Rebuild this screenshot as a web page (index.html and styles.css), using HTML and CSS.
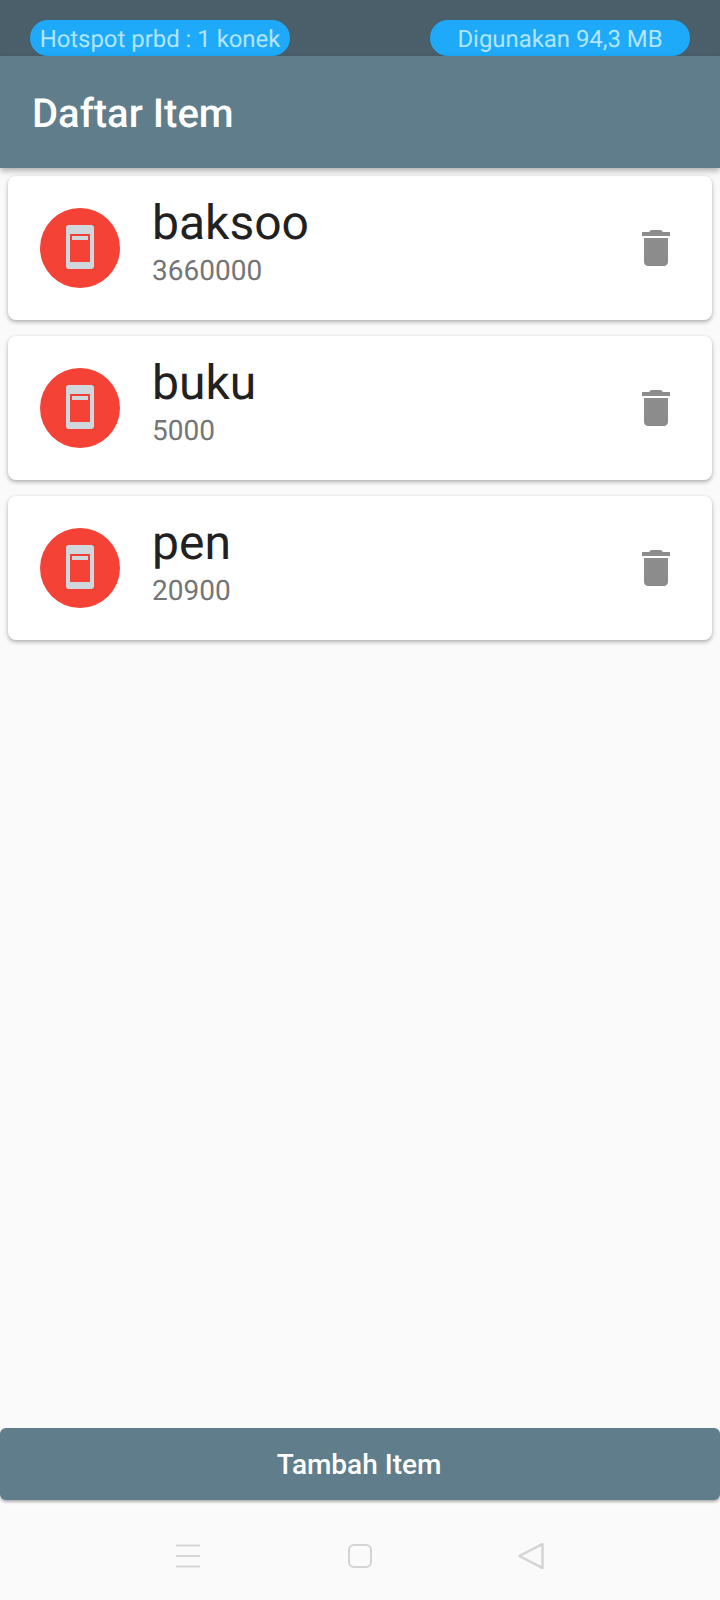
FILE: index.html
```html
<!DOCTYPE html>
<html lang="en">
<head>
    <meta charset="UTF-8">
    <meta name="viewport" content="width=device-width, initial-scale=1.0">
    <title>Daftar Item</title>
    <link rel="stylesheet" href="styles.css">
</head>
<body>
    <div class="status-bar">
        <span class="pill">Hotspot prbd : 1 konek</span>
        <span class="pill">Digunakan 94,3 MB</span>
    </div>
    <header class="app-bar">Daftar Item</header>

    <main class="item-list">
        <div class="card">
            <div class="avatar">
                <svg class="phone-icon" viewBox="0 0 28 44"><path fill-rule="evenodd" d="M3 0h22a3 3 0 0 1 3 3v38a3 3 0 0 1-3 3H3a3 3 0 0 1-3-3V3a3 3 0 0 1 3-3zM4 9v28h20V9zM6 11h16v4H6z"/></svg>
            </div>
            <div class="item-text">
                <div class="item-name">baksoo</div>
                <div class="item-price">3660000</div>
            </div>
            <svg class="trash-icon" viewBox="0 0 24 24"><path d="M6 19c0 1.1.9 2 2 2h8c1.1 0 2-.9 2-2V7H6v12zM19 4h-3.5l-1-1h-5l-1 1H5v2h14V4z"/></svg>
        </div>
        <div class="card">
            <div class="avatar">
                <svg class="phone-icon" viewBox="0 0 28 44"><path fill-rule="evenodd" d="M3 0h22a3 3 0 0 1 3 3v38a3 3 0 0 1-3 3H3a3 3 0 0 1-3-3V3a3 3 0 0 1 3-3zM4 9v28h20V9zM6 11h16v4H6z"/></svg>
            </div>
            <div class="item-text">
                <div class="item-name">buku</div>
                <div class="item-price">5000</div>
            </div>
            <svg class="trash-icon" viewBox="0 0 24 24"><path d="M6 19c0 1.1.9 2 2 2h8c1.1 0 2-.9 2-2V7H6v12zM19 4h-3.5l-1-1h-5l-1 1H5v2h14V4z"/></svg>
        </div>
        <div class="card">
            <div class="avatar">
                <svg class="phone-icon" viewBox="0 0 28 44"><path fill-rule="evenodd" d="M3 0h22a3 3 0 0 1 3 3v38a3 3 0 0 1-3 3H3a3 3 0 0 1-3-3V3a3 3 0 0 1 3-3zM4 9v28h20V9zM6 11h16v4H6z"/></svg>
            </div>
            <div class="item-text">
                <div class="item-name">pen</div>
                <div class="item-price">20900</div>
            </div>
            <svg class="trash-icon" viewBox="0 0 24 24"><path d="M6 19c0 1.1.9 2 2 2h8c1.1 0 2-.9 2-2V7H6v12zM19 4h-3.5l-1-1h-5l-1 1H5v2h14V4z"/></svg>
        </div>
    </main>

    <button class="add-button" type="button">Tambah Item</button>

    <nav class="nav-bar">
        <svg class="nav-icon" viewBox="0 0 24 24"><path d="M0 1.5h24M0 12h24M0 22.5h24"/></svg>
        <svg class="nav-icon" viewBox="0 0 24 24"><rect x="1" y="1" width="22" height="22" rx="5"/></svg>
        <svg class="nav-icon nav-back" viewBox="0 0 26 26"><path stroke-linejoin="round" d="M24.5 1v24L1.5 13z"/></svg>
    </nav>
</body>
</html>
```

FILE: styles.css
```css
body {
    font-family: Roboto, "Liberation Sans", sans-serif;
    background-color: #fafafa;
    margin: 0;
    width: 720px;
    height: 1600px;
    display: flex;
    flex-direction: column;
    overflow: hidden;
    text-rendering: geometricPrecision;
}
.status-bar {
    background-color: #4a5f6a;
    height: 56px;
    box-sizing: border-box;
    padding: 20px 30px 0;
    display: flex;
    justify-content: space-between;
}
.pill {
    background-color: #1eaaf9;
    color: #b3e5fc;
    width: 260px;
    height: 36px;
    border-radius: 18px;
    font-size: 23.9px;
    line-height: 38px;
    text-align: center;
}
.app-bar {
    background-color: #607d8b;
    color: #fff;
    height: 112px;
    box-sizing: border-box;
    padding: 4px 32px 0;
    font-size: 40px;
    font-weight: 500;
    line-height: 108px;
    box-shadow: 0 3px 6px rgba(0, 0, 0, 0.3);
    position: relative;
}
.item-list {
    flex: 1;
    padding: 8px;
    display: flex;
    flex-direction: column;
    gap: 16px;
}
.card {
    background: #fff;
    height: 144px;
    border-radius: 8px;
    padding: 0 32px;
    box-sizing: border-box;
    display: flex;
    align-items: center;
    box-shadow: 0 2px 4px rgba(0, 0, 0, 0.3), 0 0 2px rgba(0, 0, 0, 0.05);
}
.avatar {
    width: 80px;
    height: 80px;
    border-radius: 50%;
    background-color: #f44336;
    display: flex;
    align-items: center;
    justify-content: center;
    flex-shrink: 0;
}
.phone-icon {
    width: 28px;
    height: 44px;
    fill: #cfd8dc;
    margin-bottom: 2px;
}
.item-text {
    flex: 1;
    margin-left: 32px;
    padding-bottom: 13px;
}
.item-name {
    font-size: 48px;
    line-height: 56px;
    color: #212121;
    margin-bottom: 3px;
}
.item-price {
    font-size: 28px;
    line-height: 34px;
    color: #757575;
}
.trash-icon {
    width: 48px;
    height: 48px;
    fill: #8c8c8c;
}
.add-button {
    background-color: #607d8b;
    color: #fff;
    border: none;
    height: 72px;
    width: 720px;
    padding: 0 2px 0 0;
    border-radius: 6px;
    font-family: inherit;
    font-size: 28px;
    font-weight: 500;
    box-shadow: 0 2px 3px rgba(0, 0, 0, 0.3);
    flex-shrink: 0;
}
.nav-bar {
    height: 100px;
    box-sizing: border-box;
    padding-top: 12px;
    display: flex;
    align-items: center;
    justify-content: center;
    gap: 148px;
    flex-shrink: 0;
}
.nav-icon {
    width: 24px;
    height: 24px;
    fill: none;
    stroke: #d4d4d4;
    stroke-width: 2;
}
.nav-back {
    width: 26px;
    height: 26px;
    stroke-width: 2.5;
    margin-left: -2px;
}
```
